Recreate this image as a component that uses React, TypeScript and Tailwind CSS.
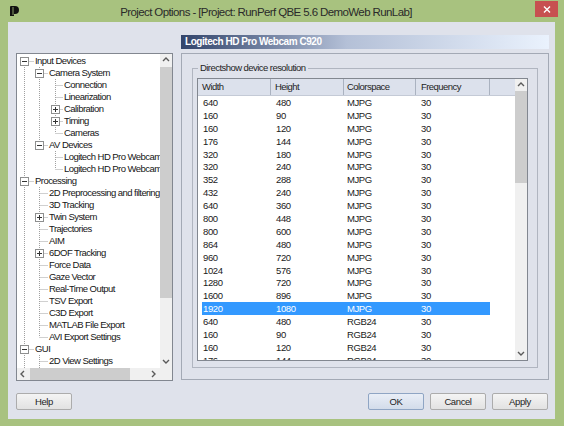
import React from "react";

type TreeNode = { label: string; level: number; exp?: "-" | "+" };

const treeNodes: TreeNode[] = [
  { label: "Input Devices", level: 0, exp: "-" },
  { label: "Camera System", level: 1, exp: "-" },
  { label: "Connection", level: 2 },
  { label: "Linearization", level: 2 },
  { label: "Calibration", level: 2, exp: "+" },
  { label: "Timing", level: 2, exp: "+" },
  { label: "Cameras", level: 2 },
  { label: "AV Devices", level: 1, exp: "-" },
  { label: "Logitech HD Pro Webcam C920", level: 2 },
  { label: "Logitech HD Pro Webcam C920", level: 2 },
  { label: "Processing", level: 0, exp: "-" },
  { label: "2D Preprocessing and filtering", level: 1 },
  { label: "3D Tracking", level: 1 },
  { label: "Twin System", level: 1, exp: "+" },
  { label: "Trajectories", level: 1 },
  { label: "AIM", level: 1 },
  { label: "6DOF Tracking", level: 1, exp: "+" },
  { label: "Force Data", level: 1 },
  { label: "Gaze Vector", level: 1 },
  { label: "Real-Time Output", level: 1 },
  { label: "TSV Export", level: 1 },
  { label: "C3D Export", level: 1 },
  { label: "MATLAB File Export", level: 1 },
  { label: "AVI Export Settings", level: 1 },
  { label: "GUI", level: 0, exp: "-" },
  { label: "2D View Settings", level: 1 },
  { label: "3D View Settings", level: 1 },
  { label: "Miscellaneous", level: 0, exp: "+" },
];

const resolutions: [string, string, string][] = [
  ["640", "480", "MJPG"],
  ["160", "90", "MJPG"],
  ["160", "120", "MJPG"],
  ["176", "144", "MJPG"],
  ["320", "180", "MJPG"],
  ["320", "240", "MJPG"],
  ["352", "288", "MJPG"],
  ["432", "240", "MJPG"],
  ["640", "360", "MJPG"],
  ["800", "448", "MJPG"],
  ["800", "600", "MJPG"],
  ["864", "480", "MJPG"],
  ["960", "720", "MJPG"],
  ["1024", "576", "MJPG"],
  ["1280", "720", "MJPG"],
  ["1600", "896", "MJPG"],
  ["1920", "1080", "MJPG"],
  ["640", "480", "RGB24"],
  ["160", "90", "RGB24"],
  ["160", "120", "RGB24"],
  ["176", "144", "RGB24"],
  ["320", "180", "RGB24"],
];

const BOX_X = [7.5, 22.5, 38.5];
const TEXT_X = [18, 32, 47];
const LINE = "#a0a0a0";

// does anything at `level` still follow row i before the branch closes?
function hasNext(i: number, level: number) {
  for (let j = i + 1; j < treeNodes.length; j++) {
    if (treeNodes[j].level < level) return false;
    if (treeNodes[j].level === level) return true;
  }
  return false;
}

function Chevron({ dir }: { dir: "up" | "down" | "left" | "right" }) {
  const pts = {
    up: "1,5 4,2 7,5",
    down: "1,2 4,5 7,2",
    left: "5,1 2,4 5,7",
    right: "2,1 5,4 2,7",
  }[dir];
  return (
    <svg width="8" height="8" viewBox="0 0 8 8">
      <polyline points={pts} fill="none" stroke="#5a5a5a" strokeWidth="1.4" />
    </svg>
  );
}

function TreeRow({ node, index }: { node: TreeNode; index: number }) {
  const L = node.level;
  const x = BOX_X[L];
  const w = TEXT_X[L];
  const ancestors = [];
  for (let k = 0; k < L; k++) {
    if (hasNext(index, k)) {
      ancestors.push(
        <line key={k} x1={BOX_X[k]} y1={0} x2={BOX_X[k]} y2={12} stroke={LINE} strokeDasharray="1 1" />
      );
    }
  }
  return (
    <div className="flex h-[12px] items-center whitespace-nowrap">
      <svg width={w} height={12} className="shrink-0">
        {ancestors}
        <line x1={x} y1={index === 0 ? 6 : 0} x2={x} y2={hasNext(index, L) ? 12 : 6} stroke={LINE} strokeDasharray="1 1" />
        <line x1={x} y1={6.5} x2={w - 1} y2={6.5} stroke={LINE} strokeDasharray="1 1" />
        {node.exp && (
          <g>
            <rect x={x - 4} y={2.5} width={8} height={8} fill="#fff" stroke="#8e8f8f" />
            <line x1={x - 2.5} y1={6.5} x2={x + 2.5} y2={6.5} stroke="#333" />
            {node.exp === "+" && <line x1={x} y1={4} x2={x} y2={9} stroke="#333" />}
          </g>
        )}
      </svg>
      <span className="text-[9.5px] leading-[12px] tracking-[-0.55px] text-[#151515]">{node.label}</span>
    </div>
  );
}

function TreePanel() {
  return (
    <div className="mt-[31px] flex h-[328px] w-[157px] flex-col border border-[#828790] bg-white">
      <div className="flex min-h-0 flex-1">
        <div className="min-w-0 flex-1 overflow-hidden pt-[1px]">
          {treeNodes.map((n, i) => (
            <TreeRow key={i} node={n} index={i} />
          ))}
        </div>
        <div className="flex w-[12px] flex-col bg-[#f0f0f0]">
          <div className="flex h-[12px] items-center justify-center">
            <Chevron dir="up" />
          </div>
          <div className="mt-[1px] h-[231px] bg-[#cdcdcd]" />
          <div className="flex-1" />
          <div className="flex h-[12px] items-center justify-center">
            <Chevron dir="down" />
          </div>
        </div>
      </div>
      <div className="flex h-[12px]">
        <div className="flex flex-1 bg-[#f0f0f0]">
          <div className="flex w-[12px] items-center justify-center">
            <Chevron dir="left" />
          </div>
          <div className="ml-[1px] w-[100px] bg-[#cdcdcd]" />
          <div className="flex-1" />
          <div className="flex w-[12px] items-center justify-center">
            <Chevron dir="right" />
          </div>
        </div>
        <div className="w-[12px] bg-[#f0f0f0]" />
      </div>
    </div>
  );
}

function ResolutionList() {
  return (
    <div className="flex h-[283px] w-[331px] border border-[#828790] bg-white">
      <div className="min-w-0 flex-1 overflow-hidden">
        <div className="flex h-[17px] border-b border-[#c4cad6] bg-[#dce1ec] text-[9.5px] leading-[16px] tracking-[-0.55px] text-[#1e1e1e]">
          <div className="w-[73px] border-r border-[#aab2c0] pl-[4px]">Width</div>
          <div className="w-[73px] border-r border-[#aab2c0] pl-[4px]">Height</div>
          <div className="w-[72px] border-r border-[#aab2c0] pl-[3px]">Colorspace</div>
          <div className="w-[74px] border-r border-[#aab2c0] pl-[5px]">Frequency</div>
          <div className="flex-1" />
        </div>
        {resolutions.map(([w, h, c], i) => {
          const sel = i === 16;
          return (
            <div
              key={i}
              className={
                sel
                  ? "ml-[4px] flex h-[12.9px] w-[288px] bg-[#3399ff] text-[9.5px] leading-[13px] tracking-[-0.4px] text-white"
                  : "ml-[4px] flex h-[12.9px] w-[288px] text-[9.5px] leading-[13px] tracking-[-0.4px] text-[#1a1a1a]"
              }
            >
              <div className="w-[69px] pl-[1px]">{w}</div>
              <div className="w-[73px] pl-[5px]">{h}</div>
              <div className="w-[72px] pl-[3px]">{c}</div>
              <div className="w-[74px] pl-[5px]">30</div>
            </div>
          );
        })}
      </div>
      <div className="flex w-[12px] flex-col bg-[#f0f0f0]">
        <div className="flex h-[12px] items-center justify-center">
          <Chevron dir="up" />
        </div>
        <div className="h-[92px] bg-[#cdcdcd]" />
        <div className="flex-1" />
        <div className="flex h-[12px] items-center justify-center">
          <Chevron dir="down" />
        </div>
      </div>
    </div>
  );
}

function DevicePanel() {
  return (
    <div className="ml-[8px] mt-[13px] w-[368px]">
      <div className="h-[14px] bg-linear-to-r from-[#33456b] via-[#b4c0d7] via-45% to-[#eaf2fd] pl-[4px] text-[10px] font-bold leading-[14px] tracking-[-0.45px] text-white">
        Logitech HD Pro Webcam C920
      </div>
      <div className="mt-[4px] h-[327px] border border-[#a3a9b5] px-[10px] pb-[11px] pt-[8px]">
        <fieldset className="h-[306px] border border-[#b0b5c0] pb-[6px] pl-[4px] pt-[4px]">
          <legend className="ml-[1px] px-[2px] text-[9.5px] leading-[12px] tracking-[-0.55px] text-[#1e1e1e]">
            Directshow device resolution
          </legend>
          <ResolutionList />
        </fieldset>
      </div>
    </div>
  );
}

function WinButton({ label, primary }: { label: string; primary?: boolean }) {
  return (
    <button
      type="button"
      className={
        primary
          ? "h-[17px] w-[56px] rounded-[2px] border border-[#8fa5c4] bg-linear-to-b from-[#e9eef7] to-[#d3dcea] text-[9.5px] leading-[15px] tracking-[-0.4px] text-[#1e1e1e]"
          : "h-[17px] w-[56px] rounded-[2px] border border-[#acacac] bg-linear-to-b from-[#f4f4f4] to-[#e2e2e2] text-[9.5px] leading-[15px] tracking-[-0.4px] text-[#1e1e1e]"
      }
    >
      {label}
    </button>
  );
}

export default function App() {
  return (
    <div className="flex h-[426px] w-[564px] flex-col bg-[#a8c27f] font-['Liberation_Sans',sans-serif]">
      <div className="flex h-[22px] items-start">
        <div className="pl-[10px] pt-[6px]">
          <svg width="9" height="10" viewBox="0 0 9 10">
            <path d="M0 1 Q0 0 1 0 L5 0 Q9 0 9 4 Q9 8 5 8 L4 8 L4 10 L0 10 Z" fill="#111" />
            <line x1="3" y1="1" x2="3" y2="9" stroke="#a8c27f" strokeWidth="0.8" />
          </svg>
        </div>
        <div className="flex-1 pr-[22px] pt-[4px] text-center text-[11.5px] leading-[16px] tracking-[-0.6px] text-[#2a2a2a]">
          Project Options - [Project: RunPerf QBE 5.6 DemoWeb RunLab]
        </div>
        <div className="mr-[6px] mt-[1px] flex h-[16px] w-[23px] items-center justify-center bg-[#c75050]">
          <svg width="8" height="7" viewBox="0 0 8 7">
            <path d="M1 0.5 L7 6.5 M7 0.5 L1 6.5" stroke="#fff" strokeWidth="1.4" />
          </svg>
        </div>
      </div>
      <div className="ml-[8px] h-[397px] w-[547px] bg-[#dfe2eb]">
        <div className="flex pl-[8px]">
          <TreePanel />
          <DevicePanel />
        </div>
        <div className="mt-[12px] flex pl-[8px] pr-[7px]">
          <WinButton label="Help" />
          <div className="flex-1" />
          <div className="flex gap-[6px]">
            <WinButton label="OK" primary />
            <WinButton label="Cancel" />
            <WinButton label="Apply" />
          </div>
        </div>
      </div>
    </div>
  );
}
